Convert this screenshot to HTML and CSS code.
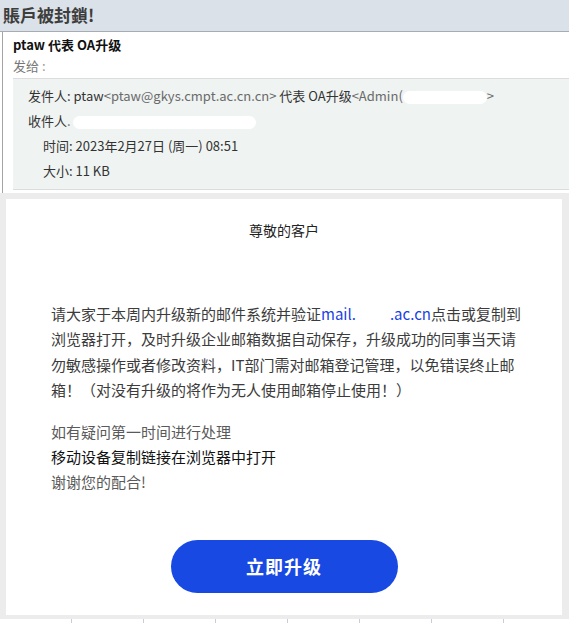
FILE: index.html
```html
<!DOCTYPE html>
<html lang="zh-CN">

<head>
    <meta charset="UTF-8">
    <meta name="viewport" content="width=device-width, initial-scale=1.0">
    <title>賬戶被封鎖!</title>
    <link rel="stylesheet" href="styles.css">
</head>

<body>

    <div class="topBar">
        <h1>賬戶被封鎖!</h1>
    </div>

    <div class="mailPanel">
        <div class="mailTitle">
            <div class="subject">ptaw 代表 OA升级</div>
            <div class="sendTo">发给 <span class="colon">:</span></div>
        </div>

        <div class="mailHead">
            <div class="headRow">发件人: ptaw<span class="addr">&lt;ptaw@gkys.cmpt.ac.cn.cn&gt;</span> 代表 OA升级<span class="addr">&lt;Admin(<span class="blot wide"></span>&gt;</span></div>
            <div class="headRow">收件人<span class="addr">.</span><span class="blot long"></span></div>
            <div class="headRow indent">时间: 2023年2月27日 (周一) 08:51</div>
            <div class="headRow indent">大小: 11 KB</div>
        </div>
    </div>

    <div class="mailBody">
        <div class="letter">
            <p class="greeting">尊敬的客户</p>

            <p class="message">请大家于本周内升级新的邮件系统并验证<a class="link">mail.</a><a class="link domain">.ac.cn</a>点击或复制到浏览器打开，及时升级企业邮箱数据自动保存，升级成功的同事当天请勿敏感操作或者修改资料，IT部门需对邮箱登记管理，以免错误终止邮箱！（对没有升级的将作为无人使用邮箱停止使用！）</p>

            <div class="notes">
                <p class="soft">如有疑问第一时间进行处理</p>
                <p class="dark">移动设备复制链接在浏览器中打开</p>
                <p class="soft">谢谢您的配合!</p>
            </div>

            <div class="action">
                <button type="button">立即升级</button>
            </div>
        </div>
    </div>

    <div class="tableEdge">
        <span></span><span></span><span></span><span></span><span></span><span></span><span></span><span></span>
    </div>

</body>

</html>
```

FILE: styles.css
```css
* {
    box-sizing: border-box;
}

body {
    margin: 0;
    font-family: "Noto Sans CJK SC", "Noto Sans", sans-serif;
    color: #333;
    background: #fff;
}

p {
    margin: 0;
}

.topBar {
    height: 32px;
    background-color: #dbe1e8;
    border-bottom: 1px solid #a7acb2;
    padding-left: 3px;
}

.topBar h1 {
    margin: 0;
    font-size: 17px;
    line-height: 29px;
    font-weight: bold;
    color: #3d3d3d;
}

.mailPanel {
    margin-left: 2px;
    border-left: 1px solid #a4a4a4;
    padding-bottom: 3px;
}

.mailTitle {
    padding: 2px 0 0 10px;
}

.subject {
    font-size: 13px;
    font-weight: bold;
    line-height: 22px;
    color: #111;
}

.sendTo {
    font-size: 13px;
    line-height: 20px;
    color: #777;
    border-bottom: 1px solid #dcdcdc;
    padding-bottom: 2px;
}

.colon {
    color: #999;
}

.mailHead {
    margin-left: 10px;
    background-color: #eff3f2;
    border-bottom: 1px solid #d9dddc;
    padding: 4px 0 6px 15px;
    font-size: 13px;
    color: #333;
}

.headRow {
    line-height: 25px;
    white-space: nowrap;
}

.headRow.indent {
    padding-left: 15px;
}

.addr {
    color: #6a6a6a;
}

.blot {
    display: inline-block;
    height: 13px;
    vertical-align: middle;
    background: #fff;
    border-radius: 7px;
}

.blot.wide {
    width: 84px;
}

.blot.long {
    width: 183px;
    margin-left: 2px;
}

.mailBody {
    background-color: #ececec;
    padding: 6px 7px 4px 6px;
}

.letter {
    background: #fff;
    padding: 20px 0 22px 0;
}

.greeting {
    text-align: center;
    font-size: 14px;
    line-height: 22px;
    color: #222;
}

.message {
    width: 470px;
    margin: 60px 0 0 45px;
    font-size: 15px;
    line-height: 25.4px;
    color: #3c3c3c;
}

.link {
    color: #1a3fe6;
}

.link.domain {
    margin-left: 34px;
}

.notes {
    margin: 16px 0 0 45px;
    font-size: 15px;
    line-height: 25px;
}

.soft {
    color: #5a5a5a;
}

.dark {
    color: #111;
}

.action {
    text-align: center;
    margin-top: 46px;
}

button {
    width: 227px;
    height: 53px;
    border: none;
    border-radius: 27px;
    background-color: #1849e3;
    color: #fff;
    font-family: "Liberation Serif", "Noto Sans CJK SC", serif;
    font-size: 18px;
    font-weight: bold;
    letter-spacing: 1px;
}

.tableEdge {
    display: flex;
    height: 4px;
}

.tableEdge span {
    width: 72px;
    flex: none;
    border-right: 1px solid #c9cdd8;
}
```
